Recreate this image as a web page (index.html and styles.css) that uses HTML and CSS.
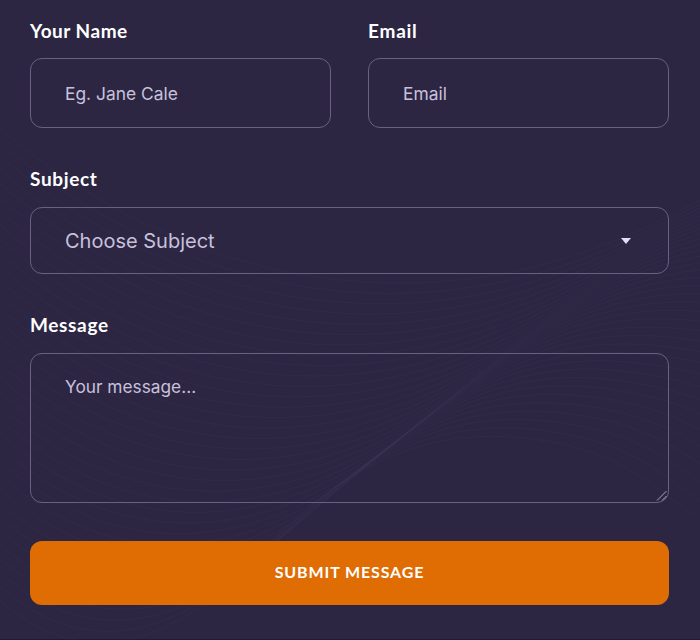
FILE: index.html
```html
<!DOCTYPE html>
<html lang="en">
<head>
<meta charset="utf-8">
<title>Contact form</title>
<link rel="stylesheet" href="styles.css">
</head>
<body>
<svg class="waves" viewBox="0 0 700 640" aria-hidden="true"></svg>
<form class="contact">
  <div class="row">
    <div class="field">
      <label class="label label-name" for="name">Your Name</label>
      <input class="control" id="name" type="text" placeholder="Eg. Jane Cale">
    </div>
    <div class="field">
      <label class="label label-email" for="email">Email</label>
      <input class="control" id="email" type="email" placeholder="Email">
    </div>
  </div>
  <div class="field field-subject">
    <label class="label label-subject" for="subject">Subject</label>
    <button class="control select" id="subject" type="button">
      <span>Choose Subject</span>
      <svg class="caret" viewBox="0 0 10 6"><path d="M0 0H10L5 6Z"/></svg>
    </button>
  </div>
  <div class="field field-message">
    <label class="label label-message" for="message">Message</label>
    <div class="message-box">
      <textarea class="control message" id="message" placeholder="Your message..."></textarea>
      <svg class="grip" viewBox="0 0 12 12"><path d="M1 10.5L10.5 1M6 10.5L10.5 6"/></svg>
    </div>
  </div>
  <button class="submit" type="button"><span>SUBMIT MESSAGE</span></button>
</form>
<script src="waves.js"></script>
</body>
</html>
```
FILE: waves.js
```js
// Blends two boundary curves into a family of fine background lines.
const upper = [-20, 110, 150, 270, 420, 355, 690, 205, 780, 160, 850, 150, 920, 150];
const lower = [-20, 580, 60, 670, 160, 665, 265, 548, 355, 455, 440, 425, 540, 440];
const svg = document.querySelector('.waves');
const count = 34;
for (let i = 0; i <= count; i++) {
  const t = i / count;
  const p = upper.map((v, k) => (v + (lower[k] - v) * t).toFixed(1));
  const end = [Number(p[12]) + 180, Number(p[13]) + 90 * t];
  const path = document.createElementNS('http://www.w3.org/2000/svg', 'path');
  path.setAttribute('d', `M${p[0]} ${p[1]}C${p.slice(2, 8).join(' ')}C${p.slice(8).join(' ')}S${end[0] - 60} ${end[1] - 30} ${end[0]} ${end[1]}`);
  svg.appendChild(path);
}
```
FILE: styles.css
```css
* { box-sizing: border-box; }

body {
  margin: 0;
  height: 640px;
  overflow: hidden;
  border-bottom: 1px solid #221b35;
  background: #2c2643;
  color: #fff;
  font-family: Inter, "Liberation Sans", sans-serif;
}

.waves {
  position: absolute;
  inset: 0;
  width: 700px;
  height: 640px;
  fill: none;
  stroke: #8478a4;
  stroke-opacity: 0.05;
  stroke-width: 1;
}

.contact {
  position: relative;
  padding: 19px 31px 0 30px;
}

.row {
  display: grid;
  grid-template-columns: 301px 301px;
  gap: 37px;
}

.field {
  display: flex;
  flex-direction: column;
}

.field-subject { margin-top: 39px; }
.field-message { margin-top: 39px; }

.label {
  align-self: flex-start;
  height: 24px;
  margin-bottom: 15px;
  font: 700 19px/24px Lato, sans-serif;
  white-space: nowrap;
}

.label-name { letter-spacing: 0.5px; }
.label-email { letter-spacing: 0.75px; }
.label-subject { letter-spacing: 0.65px; }
.label-message { letter-spacing: 0.65px; }

.field-subject .label { margin-bottom: 16px; }
.field-message .label { margin-bottom: 16px; }

.control {
  display: block;
  width: 100%;
  height: 70px;
  padding: 1px 34px;
  border: 1px solid #69617f;
  border-radius: 12px;
  outline: 0;
  background: transparent;
  color: #c8c1dc;
  font: 400 17.4px/24px Inter, sans-serif;
}

.control::placeholder {
  color: #c8c1dc;
  opacity: 1;
}

.select {
  display: flex;
  align-items: center;
  justify-content: space-between;
  height: 67px;
  padding: 0 37px 0 34px;
  font-size: 20px;
}

.caret {
  width: 10px;
  height: 6px;
  fill: #e4dcf8;
}

.message-box { position: relative; }

.message {
  height: 150px;
  padding: 21px 34px;
  font-size: 17.3px;
  resize: none;
}

.grip {
  position: absolute;
  right: 1px;
  bottom: 1px;
  width: 12px;
  height: 12px;
  fill: none;
  stroke: #aaa5b8;
  stroke-width: 1;
}

.submit {
  display: block;
  width: 100%;
  height: 64px;
  margin-top: 38px;
  padding: 0 0 2px;
  border: 0;
  border-radius: 12px;
  background: #df6d04;
  color: #fff;
  font: 700 16px/24px Lato, sans-serif;
  letter-spacing: 0.88px;
}
```
